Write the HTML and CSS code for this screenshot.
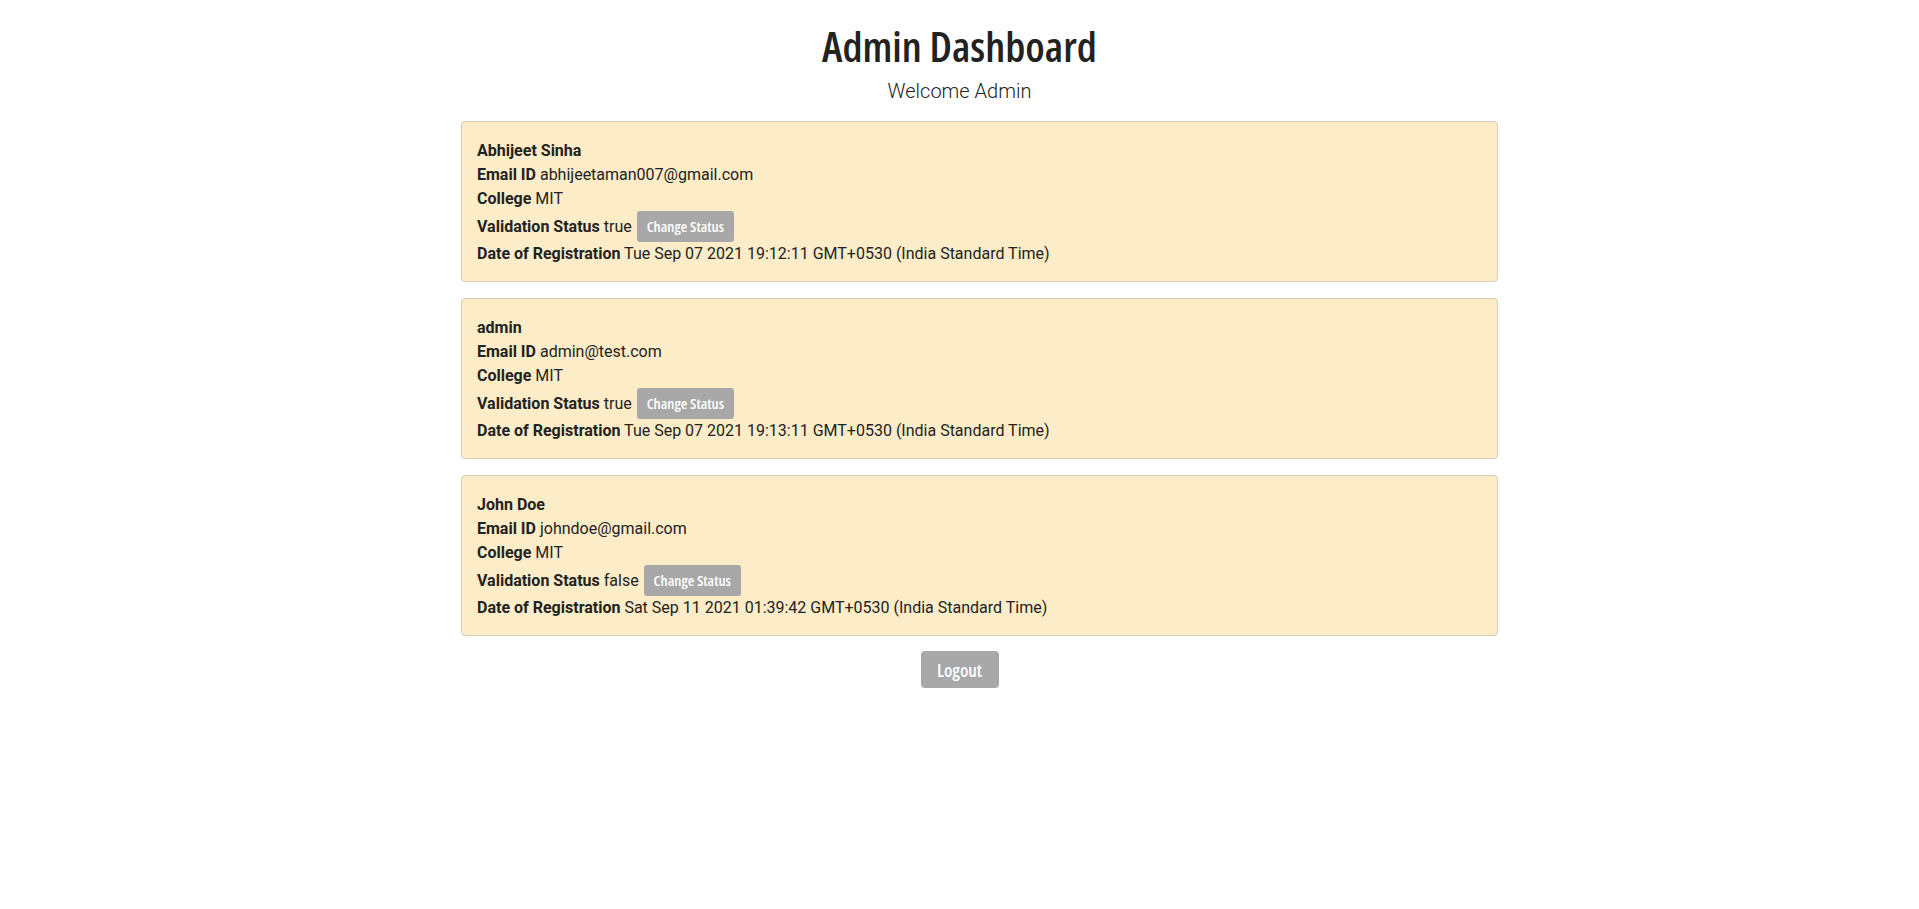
FILE: index.html
```html
<!DOCTYPE html>
<html lang="en">
<head>
<meta charset="utf-8">
<title>Admin Dashboard</title>
<link rel="stylesheet" href="styles.css">
</head>
<body>
<div class="page">
  <header class="header">
    <h1 class="title">Admin Dashboard</h1>
    <p class="subtitle">Welcome Admin</p>
  </header>
  <ul class="users">
    <li class="card">
      <div class="line"><b>Abhijeet Sinha</b></div>
      <div class="line"><b>Email ID</b> abhijeetaman007@gmail.com</div>
      <div class="line"><b>College</b> MIT</div>
      <div class="line status"><b>Validation Status</b> true <button class="btn-small">Change Status</button></div>
      <div class="line"><b>Date of Registration</b> Tue Sep 07 2021 19:12:11 GMT+0530 (India Standard Time)</div>
    </li>
    <li class="card">
      <div class="line"><b>admin</b></div>
      <div class="line"><b>Email ID</b> admin@test.com</div>
      <div class="line"><b>College</b> MIT</div>
      <div class="line status"><b>Validation Status</b> true <button class="btn-small">Change Status</button></div>
      <div class="line"><b>Date of Registration</b> Tue Sep 07 2021 19:13:11 GMT+0530 (India Standard Time)</div>
    </li>
    <li class="card">
      <div class="line"><b>John Doe</b></div>
      <div class="line"><b>Email ID</b> johndoe@gmail.com</div>
      <div class="line"><b>College</b> MIT</div>
      <div class="line status"><b>Validation Status</b> false <button class="btn-small">Change Status</button></div>
      <div class="line"><b>Date of Registration</b> Sat Sep 11 2021 01:39:42 GMT+0530 (India Standard Time)</div>
    </li>
  </ul>
  <div class="actions">
    <button class="btn-logout">Logout</button>
  </div>
</div>
</body>
</html>
```

FILE: styles.css
```css
html, body {
  margin: 0;
  padding: 0;
  background: #ffffff;
}
body {
  font-family: Roboto, "Liberation Sans", sans-serif;
  font-size: 16px;
  color: #222222;
}
.page {
  width: 1077px;
  margin: 0 auto;
}
.header {
  text-align: center;
  padding-top: 20px;
}
.title {
  margin: 0;
  font-family: "Open Sans", sans-serif;
  font-stretch: 75%;
  font-weight: 600;
  font-size: 42px;
  line-height: 52px;
  color: #222222;
}
.subtitle {
  margin: 7px 0 0;
  font-family: Roboto, sans-serif;
  font-weight: 300;
  font-size: 20px;
  line-height: 24px;
  color: #222222;
}
.users {
  list-style: none;
  margin: 18px 0 0;
  padding: 0 0 0 40px;
  display: flex;
  flex-direction: column;
  gap: 16px;
}
.card {
  background: #fdecc8;
  border: 1px solid #d6cbb5;
  border-radius: 4px;
  padding: 17px 16px 15px 15px;
}
.line {
  line-height: 24px;
}
.line b {
  font-weight: 700;
}
.status {
  line-height: 31px;
  height: 31px;
}
.btn-small {
  display: inline-block;
  vertical-align: top;
  margin: 0 0 0 1px;
  height: 31px;
  padding: 0 10px;
  border: none;
  border-radius: 3px;
  background: #a8a8a8;
  color: #ffffff;
  font-family: "Open Sans", sans-serif;
  font-stretch: 75%;
  font-weight: 600;
  font-size: 15px;
  line-height: 31px;
}
.actions {
  display: flex;
  justify-content: center;
  margin-top: 15px;
}
.btn-logout {
  width: 78px;
  height: 37px;
  padding: 0;
  border: none;
  border-radius: 4px;
  background: #a8a8a8;
  color: #ffffff;
  font-family: "Open Sans", sans-serif;
  font-stretch: 75%;
  font-weight: 600;
  font-size: 18px;
}
```
